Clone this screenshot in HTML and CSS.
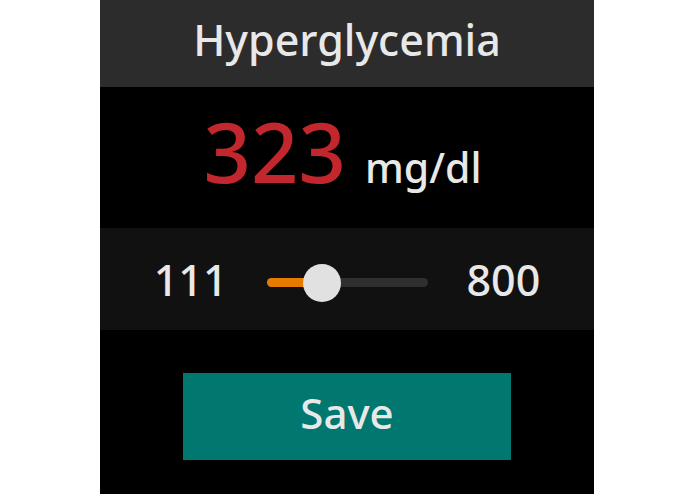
FILE: index.html
```html
<!DOCTYPE html>
<html lang="en">
<head>
<meta charset="utf-8">
<title>Hyperglycemia</title>
<link rel="stylesheet" href="styles.css">
</head>
<body>
<div class="screen">
  <div class="header">Hyperglycemia</div>
  <div class="reading">
    <span class="value">323</span>
    <span class="unit">mg/dl</span>
  </div>
  <div class="range">
    <span class="range-label">111</span>
    <div class="slider">
      <div class="track"></div>
      <div class="fill" style="width: 55px"></div>
      <div class="thumb" style="left: 36px"></div>
    </div>
    <span class="range-label">800</span>
  </div>
  <div class="actions">
    <div class="save-btn">Save</div>
  </div>
</div>
</body>
</html>
```

FILE: styles.css
```css
html, body {
  margin: 0;
  padding: 0;
  background: #ffffff;
}

body {
  font-family: "Noto Sans", "Open Sans", "DejaVu Sans", sans-serif;
  font-weight: 500;
  color: #e6e6e6;
}

.screen {
  width: 494px;
  height: 494px;
  margin-left: 100px;
  background: #000000;
  overflow: hidden;
}

.header {
  height: 80px;
  padding-bottom: 7px;
  line-height: 80px;
  background: #2c2c2c;
  text-align: center;
  font-size: 43px;
  color: #e8e8e8;
}

.reading {
  height: 134px;
  padding-top: 7px;
  padding-right: 9px;
  display: flex;
  justify-content: center;
  align-items: baseline;
  gap: 19px;
}

.value {
  font-size: 83px;
  color: #c1272d;
}

.unit {
  font-size: 41px;
  color: #e8e8e8;
}

.range {
  height: 102px;
  background: #111111;
  display: flex;
  align-items: center;
  justify-content: center;
  gap: 39px;
}

.range-label {
  font-size: 43px;
  color: #e8e8e8;
}

.slider {
  position: relative;
  width: 161px;
  height: 38px;
  margin-top: 8px;
}

.track {
  position: absolute;
  left: 0;
  right: 0;
  top: 14px;
  height: 9px;
  border-radius: 5px;
  background: #2f2f2f;
}

.fill {
  position: absolute;
  left: 0;
  top: 14px;
  height: 9px;
  border-radius: 5px;
  background: #e57c00;
}

.thumb {
  position: absolute;
  top: 0;
  width: 38px;
  height: 38px;
  border-radius: 50%;
  background: #e1e1e1;
}

.actions {
  padding-top: 43px;
  display: flex;
  justify-content: center;
}

.save-btn {
  width: 328px;
  height: 80px;
  padding-bottom: 7px;
  line-height: 80px;
  background: #00786f;
  text-align: center;
  font-size: 42px;
  color: #e8e8e8;
}
```
